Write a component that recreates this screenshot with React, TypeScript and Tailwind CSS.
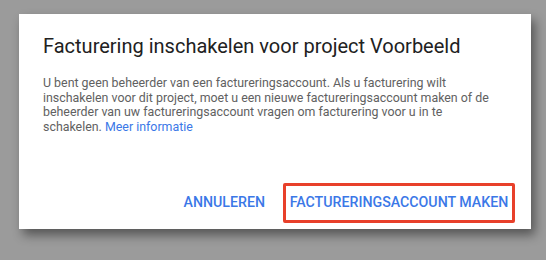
export default function App() {
  return (
    <div
      className="h-[260px] w-[546px] overflow-hidden bg-[#9b9b9b] pl-[19px] pt-[14px]"
      style={{ fontFamily: 'Roboto, "Liberation Sans", sans-serif' }}
    >
      <div className="flex h-[215px] w-[512px] flex-col bg-white shadow-[4px_6px_10px_rgba(0,0,0,0.45)]">
        <div className="px-6 pt-5">
          <h1 className="text-[20px] leading-6 text-[#212121]">Facturering inschakelen voor project Voorbeeld</h1>
          <p className="mt-[18px] pr-[12px] text-[12.4px] leading-[14.5px] text-[#616161]">
            U bent geen beheerder van een factureringsaccount. Als u facturering wilt inschakelen voor dit project,
            moet u een nieuwe factureringsaccount maken of de beheerder van uw factureringsaccount vragen om
            facturering voor u in te schakelen. <span className="text-[#3b78e7]">Meer informatie</span>
          </p>
        </div>
        <div className="mt-auto flex items-center justify-end gap-[10px] pr-4 pb-[6px]">
          <button className="h-9 px-2 text-[14.2px] font-medium uppercase text-[#3b78e7]">Annuleren</button>
          <div className="flex h-10 w-[232px] items-center justify-center rounded-[2px] border-[3px] border-[#e8402a]">
            <button className="text-[14.2px] font-medium uppercase text-[#3b78e7]">Factureringsaccount maken</button>
          </div>
        </div>
      </div>
    </div>
  )
}
